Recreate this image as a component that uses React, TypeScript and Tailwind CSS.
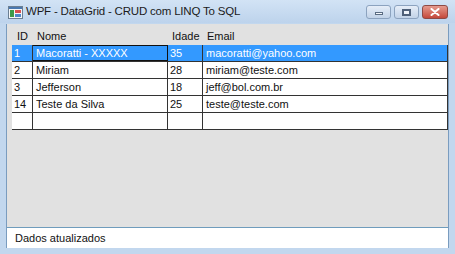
import React from 'react';

interface Row {
  id: string;
  nome: string;
  idade: string;
  email: string;
}

const rows: Row[] = [
  { id: '1', nome: 'Macoratti - XXXXX', idade: '35', email: 'macoratti@yahoo.com' },
  { id: '2', nome: 'Miriam', idade: '28', email: 'miriam@teste.com' },
  { id: '3', nome: 'Jefferson', idade: '18', email: 'jeff@bol.com.br' },
  { id: '14', nome: 'Teste da Silva', idade: '25', email: 'teste@teste.com' },
  { id: '', nome: '', idade: '', email: '' },
];

function AppIcon() {
  return (
    <svg width="15" height="13" viewBox="0 0 15 13">
      <rect x="0.5" y="0.5" width="14" height="12" fill="#f4f6f8" stroke="#6b7f93" />
      <rect x="1" y="1" width="13" height="2" fill="#4a78b0" />
      <rect x="2" y="4" width="4" height="7" fill="#3c9a4a" />
      <rect x="7" y="4" width="6" height="3" fill="#d85050" />
      <rect x="7" y="8" width="6" height="3" fill="#4f86c8" />
    </svg>
  );
}

export default function App() {
  return (
    <div className="w-[455px] h-[254px] bg-[#c2d7ee] flex flex-col font-['Liberation_Sans','Noto_Sans',sans-serif] text-[11px] text-[#111]">
      {/* Title bar */}
      <div className="h-[23px] flex items-center bg-gradient-to-b from-[#d2e3f5] to-[#bdd3ec]">
        <div className="ml-[8px] mt-[1px] flex">
          <AppIcon />
        </div>
        <span className="ml-[3px] text-[11.5px] text-[#1b1b1b] leading-none tracking-[-0.2px]">WPF - DataGrid - CRUD com LINQ To SQL</span>
        <div className="ml-auto mr-[7px] mt-[1px] flex gap-[3px]">
          <div className="w-[25px] h-[14px] rounded-[3px] border border-[#8ca3bf] bg-gradient-to-b from-[#e6eef8] to-[#c2d3e8] flex items-end justify-center pb-[3px]">
            <div className="w-[8px] h-[3px] bg-[#f4f7fb] border border-[#5a6c82]" />
          </div>
          <div className="w-[25px] h-[14px] rounded-[3px] border border-[#8ca3bf] bg-gradient-to-b from-[#e6eef8] to-[#c2d3e8] flex items-center justify-center">
            <div className="w-[9px] h-[7px] border-2 border-[#4e6079] bg-[#eef3f9]" />
          </div>
          <div className="w-[26px] h-[14px] rounded-[3px] border border-[#8e4a45] bg-gradient-to-b from-[#e59a8e] to-[#c4483c] flex items-center justify-center">
            <svg width="10" height="8" viewBox="0 0 10 8">
              <path d="M1.5 1 L8.5 7 M8.5 1 L1.5 7" stroke="#ffffff" strokeWidth="2" strokeLinecap="round" />
            </svg>
          </div>
        </div>
      </div>

      {/* Client area */}
      <div className="ml-[6px] mr-[6px] mb-[6px] mt-[1px] flex-1 flex flex-col border-l border-r border-[#7a9cbf]">
        <div className="flex-1 bg-[#e1e1e1] pl-[5px] pt-[3px] border-b border-[#6f9cbc]">
          {/* Header */}
          <div className="grid grid-cols-[21px_135px_35px_1fr] h-[18px] items-center">
            <div className="pl-[5px]">ID</div>
            <div className="pl-[4px]">Nome</div>
            <div className="pl-[4px]">Idade</div>
            <div className="pl-[4px]">Email</div>
          </div>
          {/* Rows */}
          {rows.map((r, i) => {
            const selected = i === 0;
            return (
              <div
                key={i}
                className={`grid grid-cols-[21px_135px_35px_1fr] h-[17px] border-b border-[#333] ${
                  selected ? 'bg-[#3399ff] text-white' : 'bg-white'
                }`}
              >
                <div className="pl-[2px] border-r border-[#333] leading-[16px]">{r.id}</div>
                <div
                  className={`pl-[3px] ${
                    selected ? 'border border-[#111] border-l-0 leading-[14px]' : 'border-r border-[#333] leading-[16px]'
                  }`}
                >
                  {r.nome}
                </div>
                <div className="pl-[2px] border-r border-[#333] leading-[16px]">{r.idade}</div>
                <div className="pl-[3px] border-r border-[#333] leading-[16px]">{r.email}</div>
              </div>
            );
          })}
        </div>
        {/* Status bar */}
        <div className="h-[20px] bg-white pl-[8px] flex items-center">Dados atualizados</div>
      </div>
    </div>
  );
}
